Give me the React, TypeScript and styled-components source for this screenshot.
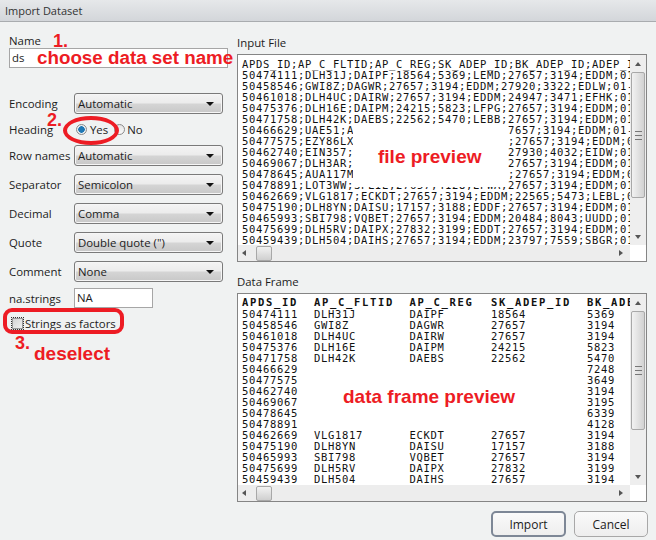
import React from 'react';
import styled, { createGlobalStyle } from 'styled-components';

const GlobalStyle = createGlobalStyle`
  html, body {
    margin: 0;
    padding: 0;
    background: #f0f2f2;
  }
`;

const Dialog = styled.div`
  position: relative;
  width: 656px;
  height: 540px;
  overflow: hidden;
  display: flex;
  flex-direction: column;
  background: #f0f2f2;
  color: #1c1c1c;
  font-family: "Open Sans", "Liberation Sans", sans-serif;
  font-size: 11.4px;
`;

const TitleBar = styled.div`
  height: 22px;
  box-sizing: border-box;
  padding-left: 5px;
  display: flex;
  align-items: center;
  background: linear-gradient(#e6e8ea, #d3d6da);
  border-bottom: 1px solid #a9acaf;
  font-size: 11px;
  color: #333;
`;

const Body = styled.div`
  display: flex;
  gap: 9px;
  padding: 11px 8px 0 9px;
`;

const LeftColumn = styled.div`
  width: 219px;
  display: flex;
  flex-direction: column;
`;

const RightColumn = styled.div`
  width: 403px;
  display: flex;
  flex-direction: column;
`;

const NameLabel = styled.div`
  height: 15px;
  line-height: 15px;
`;

const NameInput = styled.div`
  height: 20px;
  box-sizing: border-box;
  margin-bottom: 21px;
  padding-left: 2px;
  line-height: 18px;
  background: #fff;
  border: 1px solid #a6a6a6;
`;

const Row = styled.div<{ $height?: number }>`
  height: ${({ $height }) => $height ?? 29}px;
  display: flex;
  align-items: center;
`;

const RowLabel = styled.div`
  width: 65px;
  flex: none;
`;

const Select = styled.div`
  width: 149px;
  height: 21px;
  box-sizing: border-box;
  padding: 0 8px 0 3px;
  display: flex;
  align-items: center;
  justify-content: space-between;
  background: linear-gradient(#f4f4f4 0%, #ececec 45%, #d4d4d4 55%, #c8c8c8 100%);
  border: 1px solid #7a7a7a;
  border-radius: 3px;
  box-shadow: inset 0 0 0 1px #f6f6f6;
`;

const Caret = styled.span`
  width: 0;
  height: 0;
  border-left: 4px solid transparent;
  border-right: 4px solid transparent;
  border-top: 4px solid #111;
`;

const Radio = styled.label<{ $first?: boolean }>`
  display: flex;
  align-items: center;
  gap: ${({ $first }) => ($first ? 3 : 2)}px;
  margin-left: ${({ $first }) => ($first ? 2 : 6)}px;
`;

const RadioDot = styled.span<{ $on?: boolean }>`
  width: 11px;
  height: 11px;
  box-sizing: border-box;
  border-radius: 50%;
  border: 1px solid #8a8a8a;
  background: ${({ $on }) =>
    $on ? 'radial-gradient(circle, #1f78b4 0 3px, #e8eef2 3.5px)' : 'linear-gradient(#e4e4e4, #fafafa)'};
`;

const NaInput = styled.div`
  width: 79px;
  height: 20px;
  box-sizing: border-box;
  padding-left: 2px;
  line-height: 18px;
  background: #fff;
  border: 1px solid #a6a6a6;
`;

const CheckRow = styled.div`
  height: 22px;
  margin-top: 2px;
  padding-left: 2px;
  display: flex;
  align-items: center;
  gap: 1px;
`;

const CheckBox = styled.span`
  width: 13px;
  height: 13px;
  box-sizing: border-box;
  border: 1px dotted #333;
  outline: 1px solid #999;
  outline-offset: -2px;
  background: linear-gradient(135deg, #d0d0d0, #f4f4f4);
`;

const PanelTitle = styled.div`
  height: 21px;
  line-height: 20px;
`;

const Panel = styled.div<{ $height: number; $gapBelow?: number }>`
  position: relative;
  width: 410px;
  height: ${({ $height }) => $height}px;
  margin-bottom: ${({ $gapBelow }) => $gapBelow ?? 0}px;
  box-sizing: border-box;
  display: grid;
  grid-template-columns: 1fr 16px;
  grid-template-rows: 1fr 16px;
  background: #fff;
  border: 1px solid #858585;
`;

const Preview = styled.div`
  overflow: hidden;
  padding: 4px 0 0 4px;
  font-family: "DejaVu Sans Mono", "Liberation Mono", monospace;
  font-size: 10.5px;
  letter-spacing: 0.68px;
  line-height: 11px;
  white-space: pre;
  color: #111;
`;

const FrameGrid = styled.div`
  display: grid;
  grid-template-columns: 72px 95.5px 81.5px 96px 60px;
  grid-auto-rows: 11px;
`;

const HeadCell = styled.div`
  margin-top: -1px;
  font-weight: bold;
  letter-spacing: 1.68px;
`;

const VScroll = styled.div`
  display: flex;
  flex-direction: column;
  align-items: center;
  background: #eeeeee;
`;

const ScrollArrow = styled.div<{ $end?: boolean }>`
  height: 17px;
  flex: none;
  margin-top: ${({ $end }) => ($end ? 'auto' : '0')};
  display: flex;
  align-items: center;
  justify-content: center;
`;

const VThumb = styled.div<{ $height: number }>`
  width: 14px;
  height: ${({ $height }) => $height}px;
  box-sizing: border-box;
  display: flex;
  align-items: center;
  justify-content: center;
  background: linear-gradient(90deg, #f2f2f2, #d2d2d2);
  border: 1px solid #a8a8a8;
  border-radius: 2px;
`;

const Grip = styled.span`
  width: 7px;
  height: 7px;
  border-top: 1px solid #777;
  border-bottom: 1px solid #777;
  position: relative;

  &::after {
    content: '';
    position: absolute;
    left: 0;
    right: 0;
    top: 3px;
    height: 1px;
    background: #777;
  }
`;

const HScroll = styled.div`
  display: flex;
  align-items: center;
  background: #ededed;
`;

const HThumb = styled.div`
  width: 16px;
  height: 15px;
  margin-left: 7px;
  box-sizing: border-box;
  background: linear-gradient(#f2f2f2, #cfcfcf);
  border: 1px solid #a8a8a8;
  border-radius: 2px;
`;

const HArrow = styled.div<{ $end?: boolean }>`
  width: 11px;
  margin-left: ${({ $end }) => ($end ? 'auto' : '0')};
  margin-right: ${({ $end }) => ($end ? '4px' : '0')};
  display: flex;
  justify-content: center;
`;

const Triangle = styled.span<{ $dir: 'up' | 'down' | 'left' | 'right' }>`
  width: 0;
  height: 0;
  border: 3px solid transparent;
  ${({ $dir }) => ($dir === 'up' ? 'border-bottom: 4px solid #555; border-top-width: 0;' : '')}
  ${({ $dir }) => ($dir === 'down' ? 'border-top: 4px solid #555; border-bottom-width: 0;' : '')}
  ${({ $dir }) => ($dir === 'left' ? 'border-right: 4px solid #555; border-left-width: 0;' : '')}
  ${({ $dir }) => ($dir === 'right' ? 'border-left: 4px solid #555; border-right-width: 0;' : '')}
`;

const Corner = styled.div`
  background: #fff;
`;

const Footer = styled.div`
  display: flex;
  justify-content: flex-end;
  gap: 8px;
  padding: 9px 8px 0 0;
`;

const Button = styled.div<{ $primary?: boolean }>`
  width: ${({ $primary }) => ($primary ? 75 : 74)}px;
  height: 26px;
  box-sizing: border-box;
  display: flex;
  align-items: center;
  justify-content: center;
  font-size: 12px;
  background: linear-gradient(#fafafa, #eeeeee);
  border: ${({ $primary }) => ($primary ? '2px solid #7d8796' : '1px solid #a8a8a8')};
  border-radius: 5px;
`;

const Note = styled.div<{ $x: number; $y: number; $size?: number }>`
  position: absolute;
  left: ${({ $x }) => $x}px;
  top: ${({ $y }) => $y}px;
  font-family: "Liberation Sans", Arial, sans-serif;
  font-weight: bold;
  font-size: ${({ $size }) => $size ?? 19}px;
  line-height: 1;
  color: #ed1c24;
  white-space: nowrap;
`;

const WhiteOut = styled.div`
  position: absolute;
  left: 353px;
  top: 126px;
  width: 155px;
  height: 61px;
  background: #fff;
`;

const RedRing = styled.div<{ $x: number; $y: number; $w: number; $h: number; $thick: number; $radius: string }>`
  position: absolute;
  left: ${({ $x }) => $x}px;
  top: ${({ $y }) => $y}px;
  width: ${({ $w }) => $w}px;
  height: ${({ $h }) => $h}px;
  box-sizing: border-box;
  border: ${({ $thick }) => $thick}px solid #ed1c24;
  border-radius: ${({ $radius }) => $radius};
`;

const FILE_LINES = [
  'APDS_ID;AP_C_FLTID;AP_C_REG;SK_ADEP_ID;BK_ADEP_ID;ADEP_ICAO',
  '50474111;DLH31J;DAIPF;18564;5369;LEMD;27657;3194;EDDM;01-01',
  '50458546;GWI8Z;DAGWR;27657;3194;EDDM;27920;3322;EDLW;01-01',
  '50461018;DLH4UC;DAIRW;27657;3194;EDDM;24947;3471;EFHK;01-01',
  '50475376;DLH16E;DAIPM;24215;5823;LFPG;27657;3194;EDDM;01-01',
  '50471758;DLH42K;DAEBS;22562;5470;LEBB;27657;3194;EDDM;01-01',
  '50466629;UAE51;A6EDA;27657;7248;OMDB;27657;3194;EDDM;01-01',
  '50477575;EZY86LX;GEZTB;27657;3649;EGGW;27657;3194;EDDM;01-01',
  '50462740;EIN357;EIDEA;27657;3194;EDDM;27930;4032;EIDW;01-01',
  '50469067;DLH3AR;DAIQA;27657;3195;EDDT;27657;3194;EDDM;01-01',
  '50478645;AUA117M;OELBA;27657;6339;LOWW;27657;3194;EDDM;01-01',
  '50478891;LOT3WW;SPLIE;27657;4128;EPWA;27657;3194;EDDM;01-01',
  '50462669;VLG1817;ECKDT;27657;3194;EDDM;22565;5473;LEBL;01-01',
  '50475190;DLH8YN;DAISU;17157;3188;EDDF;27657;3194;EDDM;01-01',
  '50465993;SBI798;VQBET;27657;3194;EDDM;20484;8043;UUDD;01-01',
  '50475699;DLH5RV;DAIPX;27832;3199;EDDT;27657;3194;EDDM;01-01',
  '50459439;DLH504;DAIHS;27657;3194;EDDM;23797;7559;SBGR;01-01',
];

const FRAME_HEAD = ['APDS_ID', 'AP_C_FLTID', 'AP_C_REG', 'SK_ADEP_ID', 'BK_ADEP_ID'];

const FRAME_ROWS = [
  ['50474111', 'DLH31J', 'DAIPF', '18564', '5369'],
  ['50458546', 'GWI8Z', 'DAGWR', '27657', '3194'],
  ['50461018', 'DLH4UC', 'DAIRW', '27657', '3194'],
  ['50475376', 'DLH16E', 'DAIPM', '24215', '5823'],
  ['50471758', 'DLH42K', 'DAEBS', '22562', '5470'],
  ['50466629', '', '', '', '7248'],
  ['50477575', '', '', '', '3649'],
  ['50462740', '', '', '', '3194'],
  ['50469067', '', '', '', '3195'],
  ['50478645', '', '', '', '6339'],
  ['50478891', '', '', '', '4128'],
  ['50462669', 'VLG1817', 'ECKDT', '27657', '3194'],
  ['50475190', 'DLH8YN', 'DAISU', '17157', '3188'],
  ['50465993', 'SBI798', 'VQBET', '27657', '3194'],
  ['50475699', 'DLH5RV', 'DAIPX', '27832', '3199'],
  ['50459439', 'DLH504', 'DAIHS', '27657', '3194'],
];

const SELECTS_BELOW = [
  { label: 'Row names', value: 'Automatic' },
  { label: 'Separator', value: 'Semicolon' },
  { label: 'Decimal', value: 'Comma' },
  { label: 'Quote', value: 'Double quote (")' },
  { label: 'Comment', value: 'None' },
];

const Scrollbars: React.FC<{ thumbHeight: number }> = ({ thumbHeight }) => (
  <>
    <VScroll>
      <ScrollArrow>
        <Triangle $dir="up" />
      </ScrollArrow>
      <VThumb $height={thumbHeight}>
        <Grip />
      </VThumb>
      <ScrollArrow $end>
        <Triangle $dir="down" />
      </ScrollArrow>
    </VScroll>
    <HScroll>
      <HArrow>
        <Triangle $dir="left" />
      </HArrow>
      <HThumb />
      <HArrow $end>
        <Triangle $dir="right" />
      </HArrow>
    </HScroll>
    <Corner />
  </>
);

export default function App() {
  return (
    <Dialog>
      <GlobalStyle />
      <TitleBar>Import Dataset</TitleBar>
      <Body>
        <LeftColumn>
          <NameLabel>Name</NameLabel>
          <NameInput>ds</NameInput>
          <Row>
            <RowLabel>Encoding</RowLabel>
            <Select>
              Automatic
              <Caret />
            </Select>
          </Row>
          <Row $height={23}>
            <RowLabel>Heading</RowLabel>
            <Radio $first>
              <RadioDot $on />
              Yes
            </Radio>
            <Radio>
              <RadioDot />
              No
            </Radio>
          </Row>
          {SELECTS_BELOW.map((item) => (
            <Row key={item.label}>
              <RowLabel>{item.label}</RowLabel>
              <Select>
                {item.value}
                <Caret />
              </Select>
            </Row>
          ))}
          <Row $height={24}>
            <RowLabel>na.strings</RowLabel>
            <NaInput>NA</NaInput>
          </Row>
          <CheckRow>
            <CheckBox />
            Strings as factors
          </CheckRow>
        </LeftColumn>
        <RightColumn>
          <PanelTitle>Input File</PanelTitle>
          <Panel $height={208} $gapBelow={10}>
            <Preview>{FILE_LINES.join('\n')}</Preview>
            <Scrollbars thumbHeight={126} />
          </Panel>
          <PanelTitle>Data Frame</PanelTitle>
          <Panel $height={209}>
            <Preview>
              <FrameGrid>
                {FRAME_HEAD.map((head) => (
                  <HeadCell key={head}>{head}</HeadCell>
                ))}
                {FRAME_ROWS.flatMap((row, i) =>
                  row.map((cell, j) => <div key={`${i}-${j}`}>{cell}</div>)
                )}
              </FrameGrid>
            </Preview>
            <Scrollbars thumbHeight={119} />
          </Panel>
        </RightColumn>
      </Body>
      <Footer>
        <Button $primary>Import</Button>
        <Button>Cancel</Button>
      </Footer>

      <WhiteOut />
      <Note $x={53} $y={32} $size={18}>1.</Note>
      <Note $x={37} $y={49} $size={18.8}>choose data set name</Note>
      <Note $x={47} $y={111} $size={18}>2.</Note>
      <RedRing $x={63} $y={116} $w={56} $h={29} $thick={4} $radius="50%" />
      <RedRing $x={3} $y={308} $w={121} $h={26} $thick={4} $radius="9px" />
      <Note $x={15} $y={334} $size={18}>3.</Note>
      <Note $x={34} $y={344}>deselect</Note>
      <Note $x={378} $y={147}>file preview</Note>
      <Note $x={343} $y={387}>data frame preview</Note>
    </Dialog>
  );
}
